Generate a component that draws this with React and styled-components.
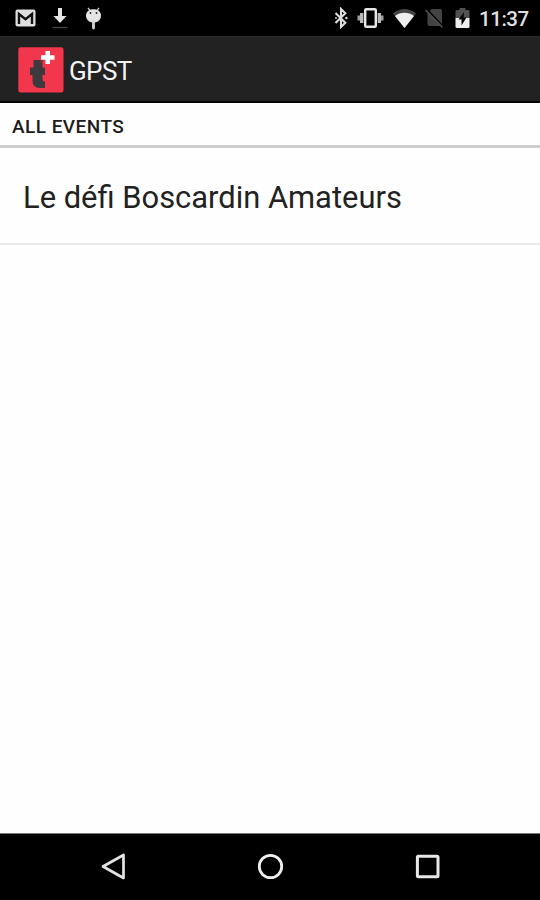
import React from "react";
import styled, { createGlobalStyle } from "styled-components";

const GlobalStyle = createGlobalStyle`
* {
box-sizing: border-box;
}

body {
margin: 0;
background: #fff;
font-family: Roboto, "Noto Sans", sans-serif;
}
`;

const Screen = styled.div`
display: flex;
flex-direction: column;
height: 900px;
overflow: hidden;
background: #fefefe;
`;

const StatusBar = styled.header`
display: flex;
justify-content: space-between;
height: 36px;
padding: 0 12px 0 15px;
background: #000;
`;

const IconGroup = styled.div`
display: flex;
align-items: center;
height: 36px;
gap: ${(props) => props.$gap}px;

svg {
display: block;
flex: none;
}
`;

const Clock = styled.span`
width: 49px;
padding-top: 2px;
color: #e0e0e0;
font-size: 20.5px;
font-weight: 500;
line-height: 34px;
letter-spacing: -0.45px;
white-space: nowrap;
`;

const ActionBar = styled.div`
display: flex;
align-items: center;
gap: 5px;
height: 67px;
padding: 1px 18px 0;
background: #222;
border-top: 1px solid #2d2d2d;
border-bottom: 2px solid #050505;

svg {
display: block;
}
`;

const AppTitle = styled.h1`
margin: 0;
padding-top: 2px;
color: #f3f3f3;
font-size: 26px;
font-weight: 400;
line-height: 32px;
letter-spacing: -0.6px;
`;

const SectionHeader = styled.h2`
height: 45px;
margin: 0;
padding-left: 12px;
color: #1c1c1c;
border-bottom: 3px solid #cecece;
font-size: 19px;
font-weight: 500;
line-height: 48px;
letter-spacing: 0.45px;
`;

const EventList = styled.ul`
flex: 1;
margin: 0;
padding: 0;
list-style: none;
`;

const EventRow = styled.li`
height: 97px;
padding-left: 23px;
color: #222;
border-bottom: 2px solid #eaeaea;
font-size: 30.9px;
font-weight: 400;
line-height: 99px;
white-space: nowrap;
`;

const NavBar = styled.nav`
display: flex;
justify-content: center;
height: 67px;
padding-bottom: 1px;
background: #000;
border-top: 1px solid #777;
`;

const NavButton = styled.button`
display: flex;
align-items: center;
justify-content: center;
width: 157px;
padding: 0;
background: none;
border: 0;
`;

const MailIcon = () => (
<svg width="21" height="18" viewBox="0 0 21 18">
<rect x="0.5" y="0.5" width="20" height="17" rx="2" fill="#dedede" />
<path d="M4 15V5L10.5 10.2L17 5V15" fill="none" stroke="#111" strokeWidth="2.4" />
</svg>
);

const DownloadIcon = () => (
<svg width="16" height="22" viewBox="0 0 16 22">
<path d="M6 1H10V9H14.5L8 16L1.5 9H6Z" fill="#e6e6e6" />
<path d="M0.5 20.5H15.5" stroke="#444" strokeWidth="1.4" />
</svg>
);

const AndroidIcon = () => (
<svg width="18" height="23" viewBox="-1 0 18 23">
<path d="M3 1L5.5 4M14 1L11.5 4" stroke="#ccc" strokeWidth="1.3" />
<path d="M8.5 2.3C13 2.3 16 5 16 8.5C16 12.5 13 15.6 8.5 15.6C4 15.6 1 12.5 1 8.5C1 5 4 2.3 8.5 2.3Z" fill="#e4e4e4" />
<path d="M8.5 14.5V21" stroke="#d4d4d4" strokeWidth="2.8" strokeLinecap="round" />
<circle cx="5.5" cy="6" r="0.9" fill="#222" />
<circle cx="11.5" cy="6" r="0.9" fill="#222" />
</svg>
);

const BluetoothIcon = () => (
<svg width="14" height="22" viewBox="0 0 14 22">
<path d="M1.5 6L11.3 15.7L7 20V2L11.3 6.3L1.5 16" fill="none" stroke="#ddd" strokeWidth="2.1" />
<circle cx="2" cy="11" r="1.1" fill="#bbb" />
<circle cx="12.4" cy="11" r="1.2" fill="#ddd" />
</svg>
);

const VibrateIcon = () => (
<svg width="27" height="22" viewBox="0 0 27 22">
<rect x="8.2" y="2.2" width="10.6" height="17.6" rx="1" fill="none" stroke="#e6e6e6" strokeWidth="2.4" />
<path d="M4.7 6V16M22.3 6V16" stroke="#b8b8b8" strokeWidth="3.4" />
<path d="M1.8 8.5V13.5M25.2 8.5V13.5" stroke="#a0a0a0" strokeWidth="2.6" />
</svg>
);

const WifiIcon = () => (
<svg width="23" height="21" viewBox="0.5 0 23 21">
<path d="M0.5 5.5C7 -0.6 17 -0.6 23.5 5.5L12 20Z" fill="#444" />
<path d="M2.5 8C8 3.8 16 3.8 21.5 8L12 20Z" fill="#eee" />
</svg>
);

const NoSimIcon = () => (
<svg width="19" height="20" viewBox="0 0 19 20">
<path d="M6.5 1H15.5Q17 1 17 2.5V18H4.5Q2.5 18 2.5 16V5Z" fill="#434343" />
<path d="M1.2 0.8L18.2 19" stroke="#000" strokeWidth="2" />
<path d="M0.5 2L17.4 19.3" stroke="#505050" strokeWidth="1.6" />
</svg>
);

const BatteryIcon = () => (
<svg width="17" height="22" viewBox="-2 0 17 22">
<path d="M4.5 1H10.5V3H13Q14.5 3 14.5 4.5V11H0.5V4.5Q0.5 3 2 3H4.5Z" fill="#505050" />
<path d="M0.5 11H14.5V19.5Q14.5 21 13 21H2Q0.5 21 0.5 19.5Z" fill="#eee" />
<path d="M9 5L3.5 12.5H6.5V18.5L11.5 10.5H8.7Z" fill="#080808" />
</svg>
);

const AppLogo = () => (
<svg width="46" height="46" viewBox="0 0 46 46">
<rect x="0.3" y="0.3" width="45.2" height="45.2" rx="2.5" fill="#f2364b" />
<path d="M15.5 13H24.5V20.5H27V28H24.5V32.5Q24.5 34.8 27 34.8V41H22Q14.5 41 14.5 33.5V28H12V20.5H15.5Z" fill="#3c3a3c" />
<path d="M21.5 13H24.5V16.5H21.5Z" fill="#702f39" />
<path d="M27.5 4H32V8.2H36.5V12.7H32V17H27.5V12.7H23V8.2H27.5Z" fill="#fff" />
</svg>
);

const BackIcon = () => (
<svg width="27" height="29" viewBox="0 0 27 29">
<path d="M3 14.5L23.5 3V26Z" fill="none" stroke="#e4e4e4" strokeWidth="2.7" strokeLinejoin="round" />
</svg>
);

const HomeIcon = () => (
<svg width="27" height="27" viewBox="0 0 27 27">
<circle cx="13.5" cy="13.5" r="11.2" fill="none" stroke="#eee" strokeWidth="2.8" />
</svg>
);

const RecentIcon = () => (
<svg width="25" height="25" viewBox="0 0 25 25">
<rect x="2.4" y="2.2" width="20.6" height="20.6" rx="1" fill="none" stroke="#e8e8e8" strokeWidth="3" />
</svg>
);

const events = ["Le défi Boscardin Amateurs"];

const navItems = [
{ label: "Back", icon: <BackIcon /> },
{ label: "Home", icon: <HomeIcon /> },
{ label: "Recent apps", icon: <RecentIcon /> },
];

const App = () => {
return (
<Screen>
  <GlobalStyle />
  <StatusBar>
    <IconGroup $gap={16}>
      <MailIcon />
      <DownloadIcon />
      <AndroidIcon />
    </IconGroup>
    <IconGroup $gap={9}>
      <BluetoothIcon />
      <VibrateIcon />
      <WifiIcon />
      <NoSimIcon />
      <BatteryIcon />
      <Clock>11:37</Clock>
    </IconGroup>
  </StatusBar>

  <ActionBar>
    <AppLogo />
    <AppTitle>GPST</AppTitle>
  </ActionBar>

  <SectionHeader>ALL EVENTS</SectionHeader>

  <EventList>
    {events.map((name) => (
      <EventRow key={name}>{name}</EventRow>
    ))}
  </EventList>

  <NavBar>
    {navItems.map((item) => (
      <NavButton key={item.label} aria-label={item.label}>
        {item.icon}
      </NavButton>
    ))}
  </NavBar>
</Screen>
);
};

export default App;
